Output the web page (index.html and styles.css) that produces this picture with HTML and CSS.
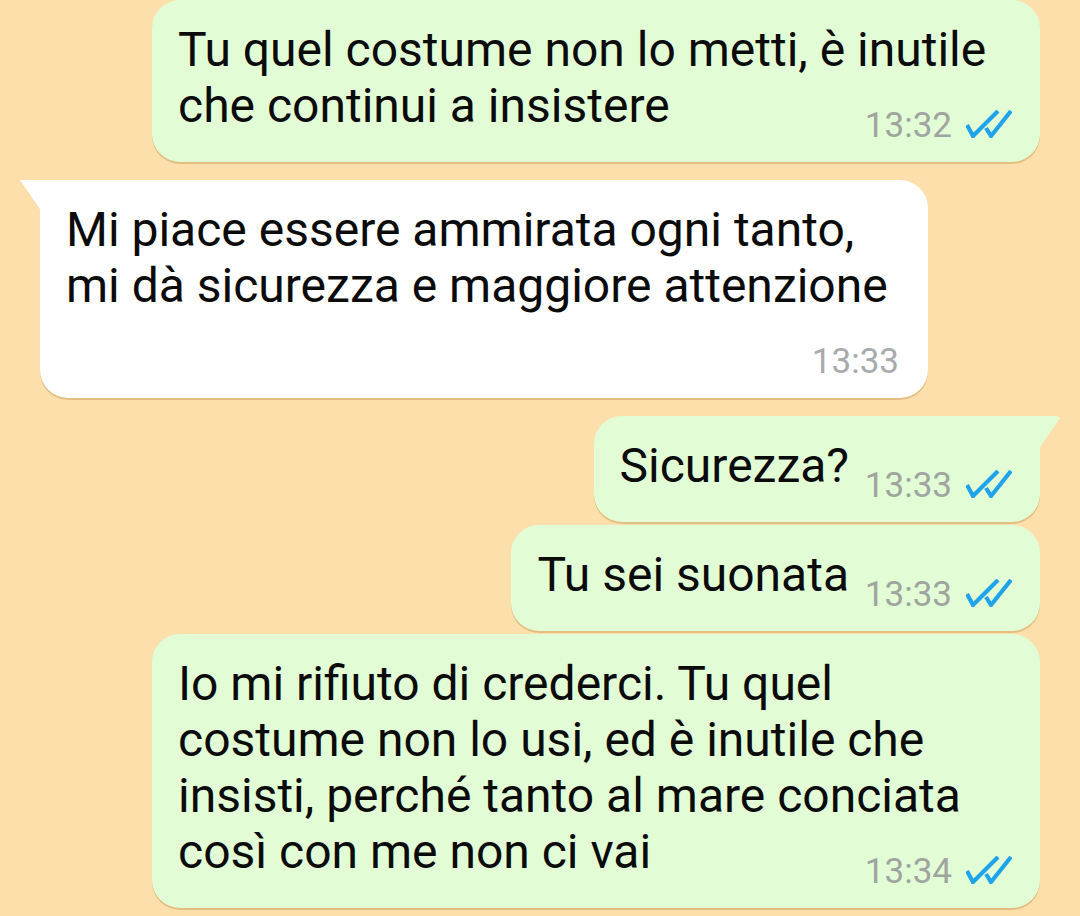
FILE: index.html
```html
<!DOCTYPE html>
<html lang="it">
<head>
<meta charset="utf-8">
<title>Chat</title>
<link rel="stylesheet" href="styles.css">
</head>
<body>
<main class="chat">
  <div class="bubble out">
    <p class="text">Tu quel costume non lo metti, è inutile che continui a insistere<span class="spacer"></span></p>
    <div class="meta"><span class="time">13:32</span><svg class="ticks" viewBox="0 0 46 28" width="46" height="28"><path d="M1 15 L7 26 L32 1 M20 18 L25 26 L45 1" fill="none" stroke="#1fa3ea" stroke-width="4.2"/></svg></div>
  </div>
  <div class="bubble in tail-in">
    <p class="text">Mi piace essere ammirata ogni tanto, mi dà sicurezza e maggiore attenzione<span class="spacer"></span></p>
    <div class="meta"><span class="time">13:33</span></div>
  </div>
  <div class="bubble out tail-out">
    <p class="text">Sicurezza?<span class="spacer"></span></p>
    <div class="meta"><span class="time">13:33</span><svg class="ticks" viewBox="0 0 46 28" width="46" height="28"><path d="M1 15 L7 26 L32 1 M20 18 L25 26 L45 1" fill="none" stroke="#1fa3ea" stroke-width="4.2"/></svg></div>
  </div>
  <div class="bubble out close">
    <p class="text">Tu sei suonata<span class="spacer"></span></p>
    <div class="meta"><span class="time">13:33</span><svg class="ticks" viewBox="0 0 46 28" width="46" height="28"><path d="M1 15 L7 26 L32 1 M20 18 L25 26 L45 1" fill="none" stroke="#1fa3ea" stroke-width="4.2"/></svg></div>
  </div>
  <div class="bubble out close">
    <p class="text">Io mi rifiuto di crederci. Tu quel costume non lo usi, ed è inutile che insisti, perché tanto al mare conciata così con me non ci vai<span class="spacer"></span></p>
    <div class="meta"><span class="time">13:34</span><svg class="ticks" viewBox="0 0 46 28" width="46" height="28"><path d="M1 15 L7 26 L32 1 M20 18 L25 26 L45 1" fill="none" stroke="#1fa3ea" stroke-width="4.2"/></svg></div>
  </div>
</main>
</body>
</html>
```
FILE: styles.css
```css
html, body {
  margin: 0;
  padding: 0;
  background: #fddfab;
  overflow: hidden;
  height: 100%;
}

.chat {
  display: flex;
  flex-direction: column;
  padding: 0 40px;
  font-family: Roboto, "Noto Sans", sans-serif;
}

.bubble {
  position: relative;
  box-sizing: border-box;
  max-width: 888px;
  padding: 22px 28px 16px 26px;
  border-radius: 28px;
  box-shadow: 0 2px 0 rgba(196, 150, 80, 0.45);
  margin-top: 18px;
}

.bubble:first-child {
  margin-top: 0;
}

.bubble.close {
  margin-top: 3px;
}

.out {
  align-self: flex-end;
  background: #e2fdd6;
}

.in {
  align-self: flex-start;
  background: #ffffff;
  padding-right: 29px;
}

.text {
  margin: 0;
  font-size: 48px;
  line-height: 56px;
  color: #0b0b0b;
}

.spacer {
  display: inline-block;
  width: 163px;
  height: 10px;
}

.in .spacer {
  width: 110px;
}

.meta {
  display: flex;
  justify-content: flex-end;
  align-items: center;
  gap: 14px;
  height: 40px;
  margin-top: -28px;
}

.time {
  font-size: 35px;
  line-height: 40px;
  color: #a0a4a0;
}

.in .time {
  color: #a7abae;
}

.ticks {
  display: block;
  margin-top: -4px;
}

.tail-out {
  border-top-right-radius: 0;
}

.tail-out::after {
  content: "";
  position: absolute;
  top: 0;
  right: -20px;
  width: 22px;
  height: 34px;
  background: #e2fdd6;
  clip-path: polygon(0 0, 82% 0, 100% 6%, 0 100%);
}

.tail-in {
  border-top-left-radius: 0;
}

.tail-in::before {
  content: "";
  position: absolute;
  top: 0;
  left: -20px;
  width: 22px;
  height: 32px;
  background: #ffffff;
  clip-path: polygon(0 0, 100% 0, 100% 100%);
}
```
